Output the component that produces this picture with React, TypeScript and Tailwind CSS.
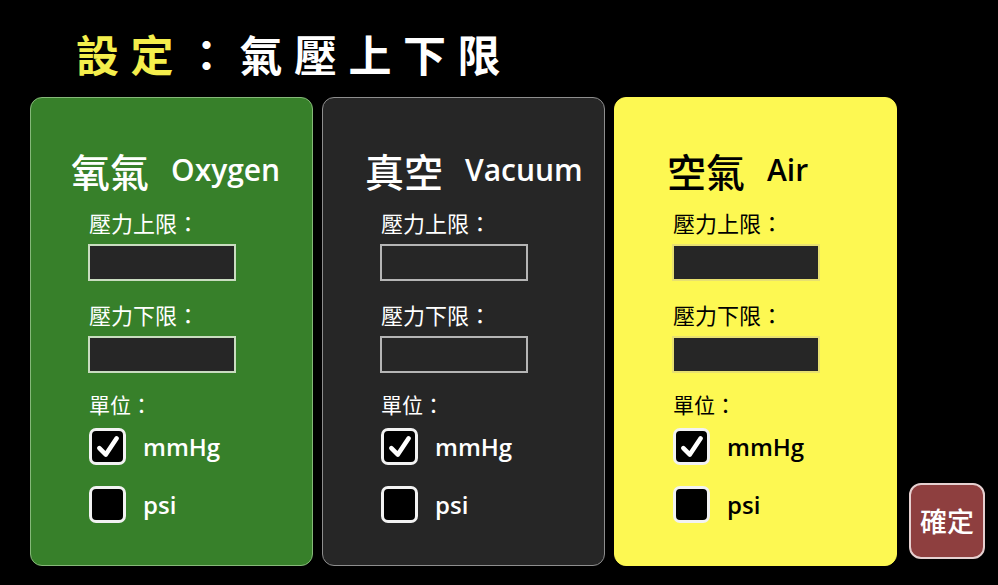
const cjk = { fontFamily: '"Noto Sans CJK TC", "Noto Sans", sans-serif' }
const latin = { fontFamily: '"Open Sans", "Noto Sans CJK TC", sans-serif' }

type PanelProps = {
  zh: string
  en: string
  tone: 'green' | 'dark' | 'yellow'
}

const tones = {
  green: {
    panel: 'bg-[#37802a] border-[#86b879]',
    text: 'text-white',
    input: 'bg-[#262626] border-[#c9dcc0]',
    titlePad: 'pl-[40px]',
  },
  dark: {
    panel: 'bg-[#262626] border-[#8e8e8e]',
    text: 'text-white',
    input: 'bg-[#262626] border-[#b5b5b5]',
    titlePad: 'pl-[42px]',
  },
  yellow: {
    panel: 'bg-[#fdf852] border-[#fdf852]',
    text: 'text-black',
    input: 'bg-[#262626] border-[#e8e070]',
    titlePad: 'pl-[52px]',
  },
}

const Check = ({ checked }: { checked?: boolean }) => (
  <div className="flex h-[37px] w-[37px] items-center justify-center rounded-[7px] border-[3px] border-[#f2f2f2] bg-black">
    {checked && (
      <svg viewBox="0 0 24 24" className="h-[26px] w-[26px]">
        <path
          d="M4 13 L10 19 L20 4"
          fill="none"
          stroke="white"
          strokeWidth="4.2"
          strokeLinecap="round"
          strokeLinejoin="round"
        />
      </svg>
    )}
  </div>
)

const Panel = ({ zh, en, tone }: PanelProps) => {
  const t = tones[tone]
  return (
    <div className={`flex h-[469px] w-[283px] flex-col rounded-[12px] border ${t.panel} ${t.text}`}>
      <div className={`mt-[52px] flex h-[40px] items-center ${t.titlePad}`}>
        <span className="text-[39px] font-medium leading-none">{zh}</span>
        <span className="ml-[22px] text-[30px] font-semibold leading-none" style={latin}>
          {en}
        </span>
      </div>
      <div className="flex flex-col pl-[57px]">
        <div className="mt-[18px] h-[28px] pl-[1px] text-[22px] leading-[28px]">壓力上限：</div>
        <div className={`mt-[8px] h-[37px] w-[148px] border-2 ${t.input}`}></div>
        <div className="mt-[19px] h-[28px] pl-[1px] text-[22px] leading-[28px]">壓力下限：</div>
        <div className={`mt-[8px] h-[37px] w-[148px] border-2 ${t.input}`}></div>
        <div className="mt-[17px] h-[28px] pl-[1px] text-[21px] leading-[28px]">單位：</div>
        <div className="mt-[10px] flex items-center gap-[17px] pl-[1px]">
          <Check checked />
          <span className="text-[24px] font-semibold" style={latin}>mmHg</span>
        </div>
        <div className="mt-[21px] flex items-center gap-[17px] pl-[1px]">
          <Check />
          <span className="text-[24px] font-semibold" style={latin}>psi</span>
        </div>
      </div>
    </div>
  )
}

export default function App() {
  return (
    <div className="flex h-[585px] w-[998px] flex-col bg-black" style={cjk}>
      <div className="mt-[30px] flex h-[46px] items-center pl-[76px] text-[43px] font-bold leading-none tracking-[11.5px] text-white">
        <span className="text-[#f4ee4c]">設定</span>
        <span>：氣壓上下限</span>
      </div>
      <div className="mt-[21px] flex items-end pl-[30px]">
        <div className="flex gap-[9px]">
          <Panel zh="氧氣" en="Oxygen" tone="green" />
          <Panel zh="真空" en="Vacuum" tone="dark" />
          <Panel zh="空氣" en="Air" tone="yellow" />
        </div>
        <button className="mb-[7px] ml-[12px] flex h-[76px] w-[76px] items-center justify-center rounded-[12px] border-2 border-[#e6d0d0] bg-[#8e3f3f] text-[27px] font-medium text-white">
          確定
        </button>
      </div>
    </div>
  )
}
